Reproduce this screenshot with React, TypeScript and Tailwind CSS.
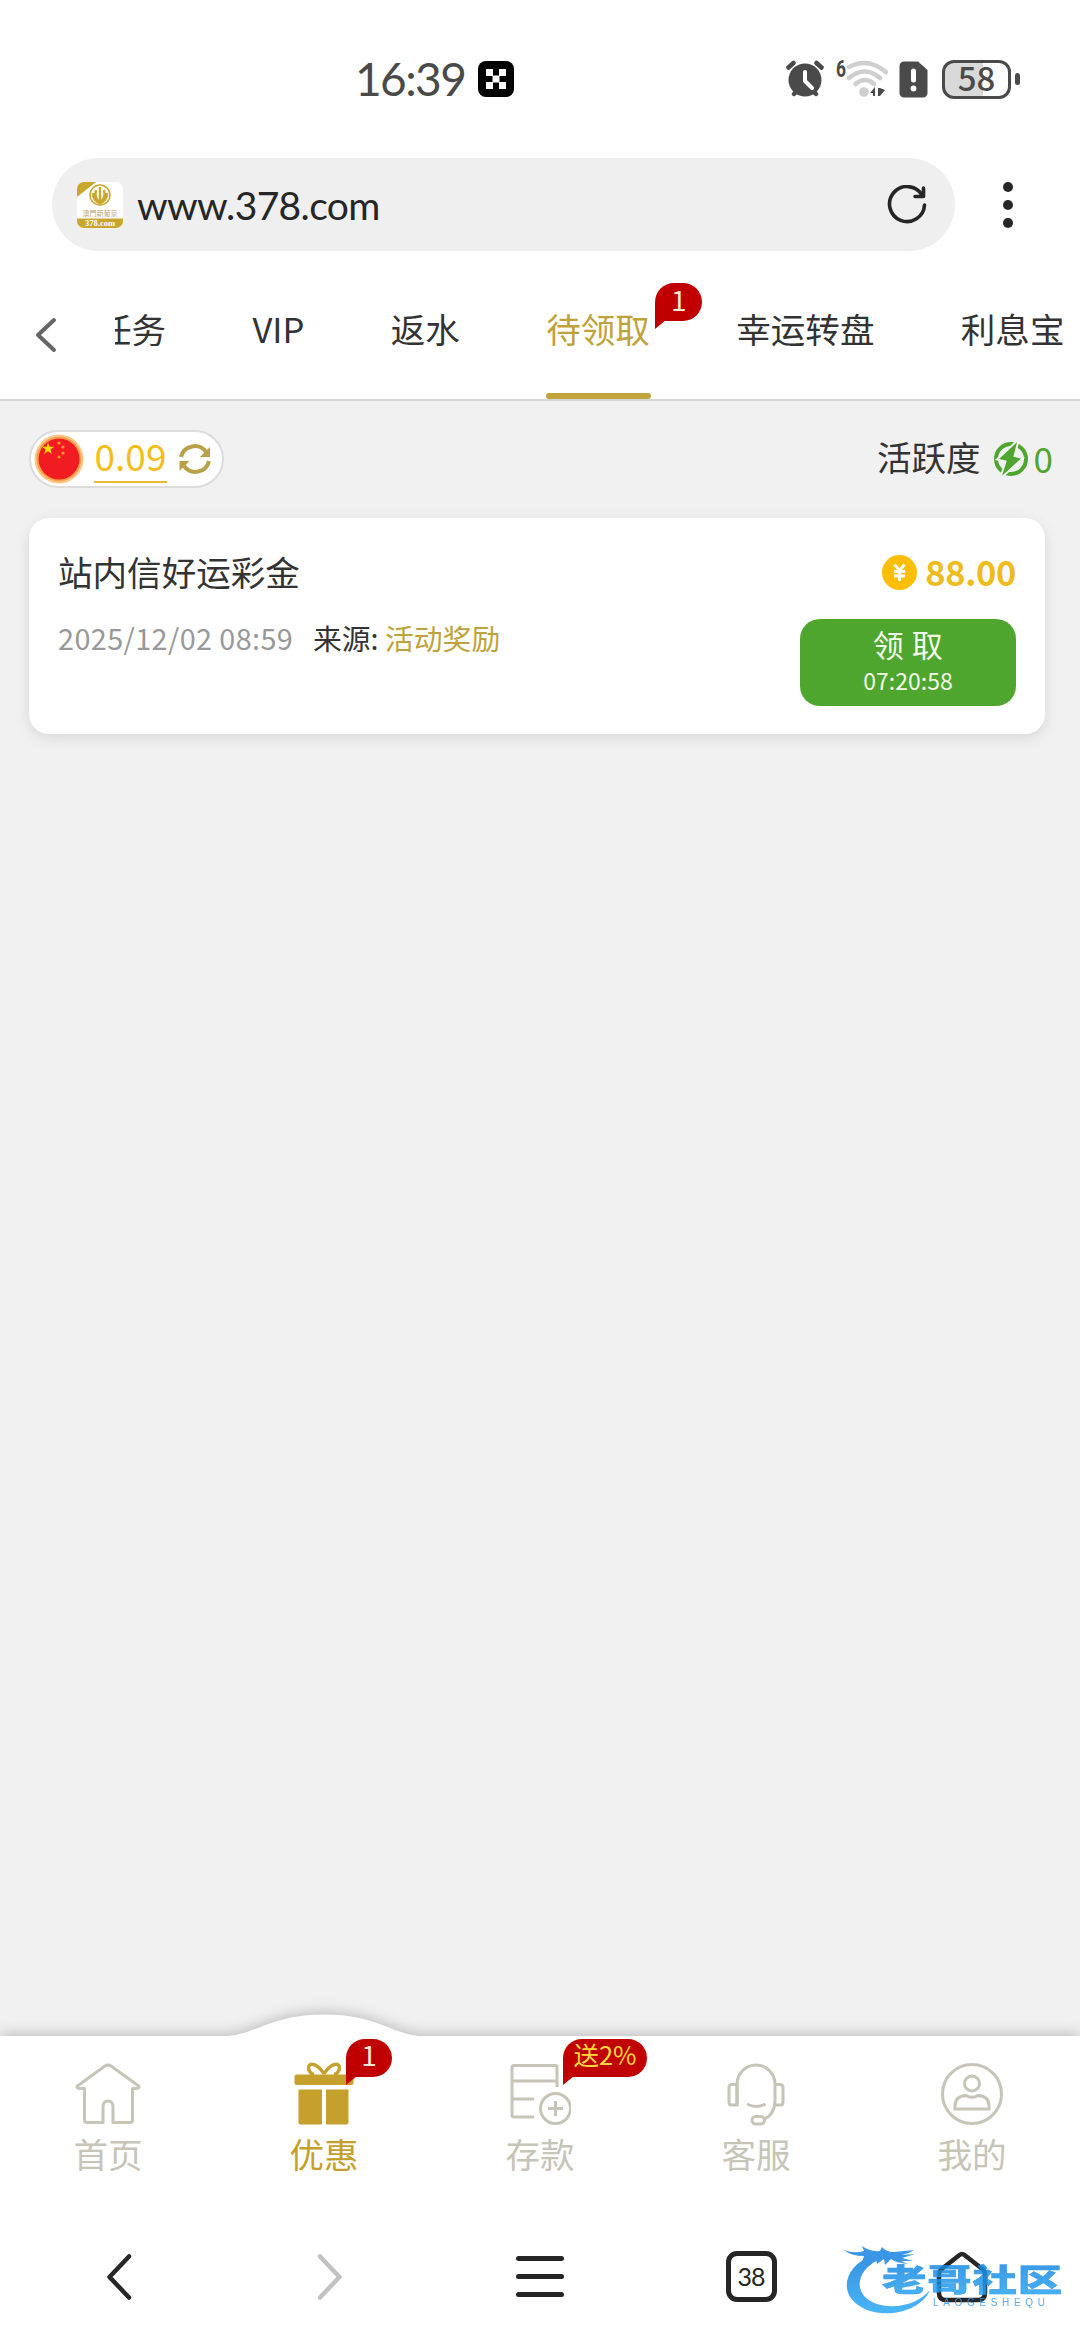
import { clsx } from "clsx"

const tabs = [
  { id: 1, label: "任务" },
  { id: 2, label: "VIP" },
  { id: 3, label: "返水" },
  { id: 4, label: "待领取", active: true, badge: "1" },
  { id: 5, label: "幸运转盘" },
  { id: 6, label: "利息宝" },
]

function Bubble({ text, className }: { text: string; className?: string }) {
  return (
    <div className={clsx("absolute flex h-[38px] items-center justify-center rounded-[19px] rounded-bl-none bg-[#c00000] leading-none", className)}>
      <span className="whitespace-nowrap">{text}</span>
      <svg className="absolute left-0 top-[37px]" width="11" height="10" viewBox="0 0 11 10" fill="#c00000">
        <path d="M0 0H11L0 9Z" />
      </svg>
    </div>
  )
}

function StatusBar() {
  return (
    <div className="flex h-[158px] shrink-0 items-center pl-[355px] text-[#4a4a4a]">
      <span className="w-[123px] font-['Lato'] text-[46px] leading-none tracking-[-1.6px]">16:39</span>
      <svg width="36" height="36" viewBox="0 0 36 36">
        <rect width="36" height="36" rx="8" fill="#000" />
        <path d="M8 8h7v7H8zM21 8h7v7h-7zM14.5 14.5h7v7h-7zM8 21h7v7H8zM21 21h7v7h-7z" fill="#fff" />
      </svg>

      <div className="ml-[272px] flex items-center">
        {/* alarm */}
        <svg width="38" height="38" viewBox="0 0 38 38" fill="none" strokeLinecap="round">
          <path d="M8 34l5-5M30 34l-5-5M2.500 7.500l5-4.500M35.500 7.500l-5-4.500" stroke="#4a4a4a" strokeWidth="4.500" />
          <circle cx="19" cy="20" r="16.500" fill="#4a4a4a" />
          <path d="M19 12v9l7 7" stroke="#fff" strokeWidth="4" strokeLinejoin="round" />
        </svg>
        {/* wifi 6 */}
        <svg className="ml-3" width="52" height="40" viewBox="0 0 52 40" fill="none">
          <text x="0" y="18" fontSize="23" fontWeight="700" fontFamily="Roboto, sans-serif" textLength="10" lengthAdjust="spacingAndGlyphs" fill="#4a4a4a">6</text>
          <g stroke="#cfcfcf" strokeWidth="4.500">
            <path d="M13 8Q32 -2 50 13" strokeLinecap="round" />
            <path d="M13 19Q29 6 44 19" strokeLinecap="round" />
            <path d="M19.500 25Q29 17 38 25" strokeLinecap="round" />
          </g>
          <circle cx="28" cy="33" r="4.800" fill="#cfcfcf" />
          <path d="M34 34l5-6v9h-2v-3zM42 29h2l5 2-5 6h-2z" fill="#4a4a4a" />
        </svg>
        {/* sim card */}
        <svg className="ml-[11px]" width="29" height="37" viewBox="0 0 29 37">
          <path d="M5 0.500H19L28.500 9V32a4.500 4.500 0 0 1-4.500 4.500H5A4.500 4.500 0 0 1 0.500 32V5A4.500 4.500 0 0 1 5 0.500Z" fill="#4a4a4a" />
          <path d="M14.500 10v9" stroke="#fff" strokeWidth="5" strokeLinecap="round" />
          <circle cx="14.500" cy="27.500" r="2.900" fill="#fff" />
        </svg>
        {/* battery */}
        <div className="ml-[14px] flex h-[39px] w-[69px] items-center justify-center rounded-[12px] border-[3px] border-[#4a4a4a] bg-linear-to-r from-[#d9d9d9] from-60% to-white to-60% pb-[4px]">
          <span className="font-['Noto_Sans_CJK_SC'] text-[33px] font-medium leading-none">58</span>
        </div>
        <div className="ml-1 h-3 w-[5px] rounded-full bg-[#4a4a4a]" />
      </div>
    </div>
  )
}

function AddressBar() {
  return (
    <div className="flex h-[93px] shrink-0 items-center pl-[52px]">
      <div className="flex h-full w-[903px] items-center rounded-full bg-[#efefef] pl-[25px]">
        <svg width="46" height="46" viewBox="0 0 46 46">
          <rect width="46" height="46" rx="7" fill="#fff" />
          <path d="M7 0H19L0 15V7A7 7 0 0 1 7 0Z" fill="#c9a72d" />
          <circle cx="23" cy="13" r="10" fill="none" stroke="#c9a72d" strokeWidth="1.500" />
          <path d="M23 5v15M19 8q-2 7 3 12M27 8q2 7-3 12M16 11q0 8 7 10 7-2 7-10" fill="none" stroke="#c9a72d" strokeWidth="2.400" />
          <path d="M0 36.500H46V39A7 7 0 0 1 39 46H7A7 7 0 0 1 0 39Z" fill="#c9a72d" />
          <text x="23" y="34" textAnchor="middle" fontSize="7" fontFamily="Noto Sans CJK TC, sans-serif" fill="#b9a56a">澳門新葡京</text>
          <text x="23" y="44" textAnchor="middle" fontSize="8.500" fontWeight="700" fontFamily="Liberation Serif, serif" fill="#fff">378.com</text>
        </svg>
        <span className="ml-[14px] w-[750px] pt-[2px] font-['Lato'] text-[39px] leading-none tracking-[-0.65px] text-[#262626]">www.378.com</span>
        <svg width="40" height="40" viewBox="0 0 40 40" fill="none" stroke="#262626" strokeWidth="3.600" strokeLinecap="round" strokeLinejoin="round">
          <path d="M35 10A17.500 17.500 0 1 0 37.500 20" />
          <path d="M36.500 3V11.500H28" />
        </svg>
      </div>
      <div className="ml-[48px] flex flex-col gap-2">
        <div className="size-[10px] rounded-full bg-[#262626]" />
        <div className="size-[10px] rounded-full bg-[#262626]" />
        <div className="size-[10px] rounded-full bg-[#262626]" />
      </div>
    </div>
  )
}

function TabBar() {
  return (
    <div className="flex h-[150px] shrink-0 border-b-2 border-[#d6d6d6]">
      <div className="flex w-[115px] shrink-0 items-center pl-[35px] pt-[19px]">
        <svg width="22" height="36" viewBox="0 0 22 36" fill="none" stroke="#666" strokeWidth="4" strokeLinecap="round" strokeLinejoin="round">
          <path d="M19 3L3 18L19 33" />
        </svg>
      </div>
      <div className="flex flex-1 overflow-hidden">
        <div className="-ml-[18px] flex shrink-0 gap-[86.400px]">
          {tabs.map((tab) => (
            <div
              key={tab.id}
              className={clsx(
                "relative flex shrink-0 items-center whitespace-nowrap pt-[7px] text-[34.560px] leading-none",
                tab.active ? "text-[#bfa23a]" : "text-[#333]",
              )}
            >
              {tab.label}
              {tab.badge && <Bubble text={tab.badge} className="left-[109px] top-[32px] w-[47px] pb-[7px] text-[28px] text-[#f7ead8]" />}
              {tab.active && <div className="absolute bottom-0 left-0 h-[6px] w-[105px] rounded-full bg-[#bfa23a]" />}
            </div>
          ))}
        </div>
      </div>
    </div>
  )
}

function BalanceRow() {
  return (
    <div className="flex items-center justify-between pl-[29px] pr-[27px]">
      <div className="flex h-[58px] w-[195px] items-center rounded-full border-2 border-[#dcdcdc] bg-white pl-[3px]">
        <svg width="50" height="50" viewBox="0 0 50 50">
          <circle cx="25" cy="25" r="24.500" fill="#fbc98a" />
          <circle cx="25" cy="25" r="22.500" fill="#f6a04c" />
          <circle cx="25" cy="25" r="20.500" fill="#f01c22" />
          <path d="M14 8.500l1.500 4.300h4.600l-3.700 2.800 1.400 4.400-3.800-2.700-3.800 2.700 1.400-4.400-3.700-2.800h4.600z" fill="#ffde00" />
          <g fill="#f9a01b">
            <circle cx="25" cy="9" r="1.600" />
            <circle cx="29" cy="13" r="1.600" />
            <circle cx="29" cy="19" r="1.600" />
            <circle cx="25" cy="23" r="1.600" />
          </g>
        </svg>
        <div className="ml-[10px] flex h-[48px] w-[73px] items-center justify-center border-b-2 border-[#e9bb2c] pb-[6px]">
          <span className="text-[37px] leading-none text-[#f3bd1c]">0.09</span>
        </div>
        <svg className="ml-[12px]" width="32" height="32" viewBox="0 0 32 32" fill="none" stroke="#b9a14a" strokeWidth="4">
          <path d="M2 14A14 14 0 0 1 27 9" />
          <path d="M30 18A14 14 0 0 1 5 23" />
          <path d="M31 4V14H21Z" fill="#b9a14a" stroke="none" />
          <path d="M0.500 28V18H10.500Z" fill="#b9a14a" stroke="none" />
        </svg>
      </div>

      <div className="flex items-center leading-none">
        <span className="pb-[5px] text-[34.560px] text-[#333]">活跃度</span>
        <svg className="ml-[12px]" width="36" height="36" viewBox="0 0 36 36">
          <circle cx="18" cy="18" r="15" fill="none" stroke="#4ea62e" strokeWidth="4" />
          <path d="M26 -2L4 18.500L12.500 20.500L7 38L30 17L21.500 15Z" fill="#4ea62e" stroke="#f1f1f1" strokeWidth="2" />
        </svg>
        <span className="ml-[5px] pb-[4px] text-[35px] text-[#4ea62e]">0</span>
      </div>
    </div>
  )
}

function RewardCard() {
  return (
    <div className="ml-[29px] mr-[35px] mt-[30px] flex h-[216px] justify-between rounded-[20px] bg-white px-[29px] shadow-[0_4px_14px_rgba(0,0,0,0.1)]">
      <div className="pt-[36px] leading-none">
        <h3 className="text-[34.560px] leading-none text-[#333]">站内信好运彩金</h3>
        <div className="mt-[35px] flex text-[28.800px]">
          <span className="w-[255px] tracking-[0.400px] text-[#999]">2025/12/02 08:59</span>
          <span className="w-[72px] text-[#333]">来源:</span>
          <span className="text-[#bfa23a]">活动奖励</span>
        </div>
      </div>
      <div className="flex flex-col items-end">
        <div className="mt-[37px] flex h-[35px] items-center">
          <svg width="35" height="35" viewBox="0 0 35 35">
            <circle cx="17.500" cy="17.500" r="17.500" fill="#fdbe05" />
            <path d="M12.500 9.500l5 6 5-6M17.500 15.500v10.500M12 16.500h11M12 21h11" stroke="#fff" strokeWidth="2.800" fill="none" />
          </svg>
          <span className="ml-[8px] pb-[2px] text-[34.500px] font-bold leading-none tracking-[-0.400px] text-[#efbb1d]">88.00</span>
        </div>
        <button className="mt-[29px] flex h-[87px] w-[216px] flex-col items-center rounded-[20px] bg-[#4ea62e] pt-[9px] text-[#f4fbe9]">
          <span className="text-[31px] leading-none tracking-[0.500px]">领 取</span>
          <span className="mt-[10px] text-[23px] leading-none">07:20:58</span>
        </button>
      </div>
    </div>
  )
}

const navItems = [
  {
    id: 1,
    label: "首页",
    icon: (
      <svg width="66" height="64" viewBox="0 0 66 64" fill="none" stroke="#c7c4b8" strokeWidth="3" strokeLinejoin="round">
        <path d="M9.500 26.500H4Q0.500 25.500 3 23.500L30 4Q33 2 36 4L63 23.500Q65.500 25.500 62 26.500H57.500V58Q57.500 60.500 55 60.500H38V45Q38 39 33 39Q28 39 28 45V60.500H12Q9.500 60.500 9.500 58Z" />
      </svg>
    ),
  },
  {
    id: 2,
    label: "优惠",
    active: true,
    badge: "1",
    badgeClass: "left-[130px] top-[3px] w-[46px] pb-[8px] text-[28px] text-[#f7ead8]",
    icon: (
      <svg width="60" height="64" viewBox="0 0 60 64" fill="#c5a02c">
        <path d="M30 12C24 2 15 -1 14.500 6C14.500 9 17 12 20 12.500M30 12C36 2 45 -1 45.500 6C45.500 9 43 12 40 12.500" fill="none" stroke="#c5a02c" strokeWidth="3.400" />
        <rect x="0.500" y="12.500" width="59" height="10.500" rx="2" />
        <path d="M4.500 27.500H28V62.500H6.500Q4.500 62.500 4.500 60.500ZM32 27.500H54.500V60.500Q54.500 62.500 52.500 62.500H32Z" />
      </svg>
    ),
  },
  {
    id: 3,
    label: "存款",
    badge: "送2%",
    badgeClass: "left-[131px] top-[3px] w-[84px] pb-[8px] text-[25.500px] text-[#ffd83d]",
    icon: (
      <svg width="62" height="64" viewBox="0 0 62 64" fill="none" stroke="#c7c4b8" strokeWidth="3">
        <path d="M48 25V5Q48 3.500 46.500 3.500H5Q3 3.500 3 5.500V53Q3 55 5 55H25M3 19H48M3 37H25" />
        <circle cx="46.500" cy="46.500" r="15" />
        <path d="M46.500 39V54M39 46.500H54" />
      </svg>
    ),
  },
  {
    id: 4,
    label: "客服",
    icon: (
      <svg width="58" height="64" viewBox="0 0 58 64" fill="none" stroke="#c7c4b8" strokeWidth="3">
        <path d="M10 43V22A19 19 0 0 1 48 22V38Q48 52 37.500 57" />
        <path d="M10 22.500H5Q2 22.500 2 25.500V40Q2 43 5 43H10ZM48 22.500H53Q56 22.500 56 25.500V40Q56 43 53 43H48M20 42Q29 47 38.500 42" />
        <rect x="25" y="54.500" width="12.500" height="7.500" rx="3.700" />
      </svg>
    ),
  },
  {
    id: 5,
    label: "我的",
    icon: (
      <svg width="64" height="64" viewBox="0 0 64 64" fill="none" stroke="#c7c4b8" strokeWidth="3">
        <circle cx="32" cy="32" r="29.500" />
        <circle cx="32" cy="21.500" r="7.500" />
        <path d="M15 47V44Q15 34 26 33.500Q32 37 38 33.500Q49 34 49 44V47Z" />
      </svg>
    ),
  },
]

function BottomNav() {
  return (
    <div className="relative h-[177px] shrink-0">
      <svg className="absolute left-0 -top-[22px] drop-shadow-[0_-2px_7px_rgba(0,0,0,0.22)]" width="1080" height="260" viewBox="0 0 1080 260" fill="#fff">
        <path d="M0 22H228C256 20 272 0.500 324 0.500C376 0.500 392 20 420 22H1080V260H0Z" />
      </svg>
      <div className="relative grid grid-cols-5">
        {navItems.map((item) => (
          <div key={item.id} className="relative flex flex-col items-center pt-[26px]">
            {item.icon}
            <span className={clsx("mt-[10px] text-[34.560px] leading-none", item.active ? "text-[#c5a02c]" : "text-[#c7c4b8]")}>
              {item.label}
            </span>
            {item.badge && <Bubble text={item.badge} className={item.badgeClass} />}
          </div>
        ))}
      </div>
    </div>
  )
}

function Watermark() {
  return (
    <svg className="opacity-85" width="226" height="80" viewBox="0 0 226 80">
      <defs>
        <linearGradient id="wave" x1="0" y1="0" x2="0" y2="1">
          <stop offset="0" stopColor="#1480dc" />
          <stop offset="1" stopColor="#2aa9f5" />
        </linearGradient>
      </defs>
      <path d="M28 11C2 20 -6 46 14 60C36 76 76 68 86 45C74 60 48 66 28 57C8 46 14 25 34 15Z" fill="url(#wave)" />
      <path d="M0 5Q10 9 20 6L18 1Q26 7 36 6L38 2Q42 7 50 7L70 5Q64 9 58 10L71 9L58 13L69 16L57 16L64 19Q52 18 47 14L41 20L40 14L33 19L32 14L26 20L26 14L18 17L20 11Q7 11 0 5Z" fill="#1985e2" />
      <text transform="translate(38 46) scale(1.430 1)" fontSize="31" fontWeight="900" fontFamily="Noto Sans CJK SC, sans-serif" fill="url(#wave)" stroke="#1d8de6" strokeWidth="0.600" textLength="126">老哥社区</text>
      <text x="89" y="61" fontSize="10" fontFamily="Liberation Sans, sans-serif" fill="#3b9ce8" textLength="112">LAOGESHEQU</text>
    </svg>
  )
}

function BrowserBar() {
  return (
    <div className="relative grid h-[127px] shrink-0 grid-cols-[238px_184px_236px_186px_236px] items-center justify-items-center bg-white text-[#262626]">
      <svg width="26" height="46" viewBox="0 0 26 46" fill="none" stroke="currentColor" strokeWidth="4.500" strokeLinecap="round" strokeLinejoin="round">
        <path d="M23 2.500L3.500 23L23 43.500" />
      </svg>
      <svg width="26" height="46" viewBox="0 0 26 46" fill="none" stroke="#c2c2c2" strokeWidth="4.500" strokeLinecap="round" strokeLinejoin="round">
        <path d="M3 2.500L22.500 23L3 43.500" />
      </svg>
      <div className="flex w-[48px] flex-col gap-[13px]">
        <div className="h-[5px] rounded-full bg-[#262626]" />
        <div className="h-[5px] rounded-full bg-[#262626]" />
        <div className="h-[5px] rounded-full bg-[#262626]" />
      </div>
      <div className="flex size-[51px] items-center justify-center rounded-[11px] border-[5px] border-[#262626]">
        <span className="font-['Lato'] text-[25px] leading-none tracking-[-1px]">38</span>
      </div>
      <div className="relative flex h-full w-full items-center justify-center">
        <svg width="52" height="52" viewBox="0 0 52 52" fill="none" stroke="currentColor" strokeWidth="4.500" strokeLinejoin="round">
          <path d="M23.500 4Q26 2 28.500 4L47 18.500Q49 20.500 49 23V42Q49 49 42 49H10Q3 49 3 42V23Q3 20.500 5 18.500Z" />
        </svg>
        <div className="absolute left-0 top-[32px]">
          <Watermark />
        </div>
      </div>
    </div>
  )
}

export default function App() {
  return (
    <div className="flex h-[2340px] w-[1080px] flex-col overflow-hidden bg-white font-['Noto_Sans_CJK_SC',sans-serif]">
      <StatusBar />
      <AddressBar />
      <TabBar />
      <div className="flex-1 bg-[#f1f1f1] pt-[29px]">
        <BalanceRow />
        <RewardCard />
      </div>
      <BottomNav />
      <BrowserBar />
    </div>
  )
}
